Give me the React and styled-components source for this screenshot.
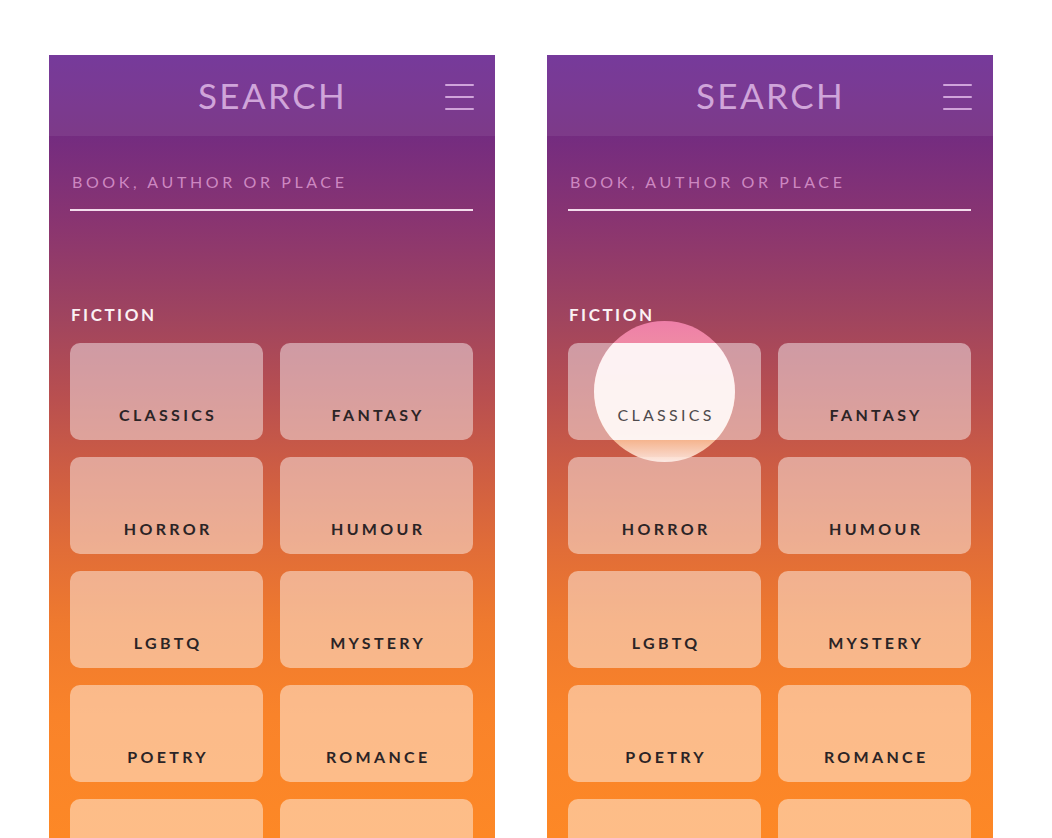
import React from "react";
import styled, { createGlobalStyle } from "styled-components";

const Global = createGlobalStyle`
  html, body { margin: 0; padding: 0; background: #ffffff; }
  body { font-family: Lato, "Noto Sans", sans-serif; }
  * { box-sizing: border-box; }
`;

const Page = styled.div`
  display: flex;
  gap: 52px;
  padding: 55px 0 0 49px;
  height: 838px;
  overflow: hidden;
  background: #ffffff;
`;

const Phone = styled.div`
  width: 446px;
  height: 783px;
  flex-shrink: 0;
  display: flex;
  flex-direction: column;
  overflow: hidden;
  background: linear-gradient(
    180deg,
    #6c2c94 0px,
    #742c80 81px,
    #8a3570 170px,
    #9f445f 260px,
    #b84f50 340px,
    #cc5c44 410px,
    #e06c38 490px,
    #ef7a2e 570px,
    #f9832a 660px,
    #fd8826 783px
  );
`;

const Header = styled.header`
  height: 81px;
  display: grid;
  grid-template-columns: 1fr auto 1fr;
  align-items: center;
  background: rgba(255, 255, 255, 0.07);
`;

const Title = styled.h1`
  grid-column: 2;
  margin: 0 0 0 1px;
  font-family: Lato, "Noto Sans", sans-serif;
  font-weight: 400;
  font-size: 35px;
  line-height: 81px;
  letter-spacing: 2.4px;
  color: rgba(232, 195, 238, 0.78);
`;

const MenuButton = styled.button`
  grid-column: 3;
  justify-self: end;
  width: 29px;
  height: 26px;
  padding: 0;
  margin: 2px 21px 0 0;
  border: 0;
  background: none;
  display: flex;
`;

const Content = styled.div`
  padding: 0 22px 0 21px;
  display: flex;
  flex-direction: column;
`;

const SearchField = styled.div`
  margin-top: 36px;
  padding: 0 0 17px 2px;
  border-bottom: 2px solid rgba(255, 240, 250, 0.9);
  font-size: 16px;
  line-height: 20px;
  letter-spacing: 3.6px;
  color: rgba(226, 160, 214, 0.8);
`;

const SectionTitle = styled.h2`
  margin: 93px 0 0 1px;
  font-size: 17px;
  line-height: 22px;
  font-weight: 700;
  letter-spacing: 2.5px;
  color: #fbf1f4;
`;

const Grid = styled.div`
  margin-top: 17px;
  display: grid;
  grid-template-columns: 1fr 1fr;
  grid-auto-rows: 97px;
  column-gap: 17px;
  row-gap: 17px;
`;

const Card = styled.div`
  position: relative;
  z-index: ${(p) => (p.$pressed ? 1 : 0)};
  border-radius: 10px;
  background: rgba(255, 255, 255, 0.45);
  display: flex;
  align-items: flex-end;
  justify-content: center;
  padding-bottom: 15px;
`;

const Label = styled.span`
  position: relative;
  z-index: 2;
  font-size: 16px;
  line-height: 20px;
  font-weight: ${(p) => (p.$pressed ? 400 : 700)};
  letter-spacing: 3.3px;
  margin-right: -3.3px;
  color: ${(p) => (p.$pressed ? "#4f4b4d" : "#2b2426")};
`;

const Halo = styled.div`
  position: absolute;
  left: 50%;
  top: 50%;
  width: 141px;
  height: 141px;
  margin: -70.5px 0 0 -70.5px;
  border-radius: 50%;
  background: linear-gradient(
    180deg,
    rgba(255, 140, 185, 0.82) 0%,
    rgba(255, 155, 180, 0.82) 20%,
    rgba(255, 185, 130, 0.82) 80%,
    rgba(255, 240, 235, 0.9) 100%
  );
  z-index: 0;
`;

const Clip = styled.div`
  position: absolute;
  inset: 0;
  border-radius: 10px;
  overflow: hidden;
  z-index: 1;
`;

const WhiteCircle = styled.div`
  position: absolute;
  left: 50%;
  top: 50%;
  width: 141px;
  height: 141px;
  margin: -70.5px 0 0 -70.5px;
  border-radius: 50%;
  background: rgba(253, 247, 247, 0.95);
`;

const genres = [
  "CLASSICS",
  "FANTASY",
  "HORROR",
  "HUMOUR",
  "LGBTQ",
  "MYSTERY",
  "POETRY",
  "ROMANCE",
  "",
  "",
];

function MenuIcon() {
  return (
    <svg width="29" height="26" viewBox="0 0 29 26">
      <g stroke="rgba(232,195,238,0.78)" strokeWidth="2" strokeLinecap="round">
        <line x1="1" y1="1" x2="28" y2="1" />
        <line x1="1" y1="13" x2="28" y2="13" />
        <line x1="1" y1="25" x2="28" y2="25" />
      </g>
    </svg>
  );
}

function Screen({ pressedIndex }) {
  return (
    <Phone>
      <Header>
        <Title>SEARCH</Title>
        <MenuButton aria-label="Menu">
          <MenuIcon />
        </MenuButton>
      </Header>
      <Content>
        <SearchField>BOOK, AUTHOR OR PLACE</SearchField>
        <SectionTitle>FICTION</SectionTitle>
        <Grid>
          {genres.map((g, i) => {
            const pressed = i === pressedIndex;
            return (
              <Card key={i} $pressed={pressed}>
                {pressed && <Halo />}
                {pressed && (
                  <Clip>
                    <WhiteCircle />
                  </Clip>
                )}
                {g && <Label $pressed={pressed}>{g}</Label>}
              </Card>
            );
          })}
        </Grid>
      </Content>
    </Phone>
  );
}

export default function App() {
  return (
    <>
      <Global />
      <Page>
        <Screen pressedIndex={-1} />
        <Screen pressedIndex={0} />
      </Page>
    </>
  );
}
